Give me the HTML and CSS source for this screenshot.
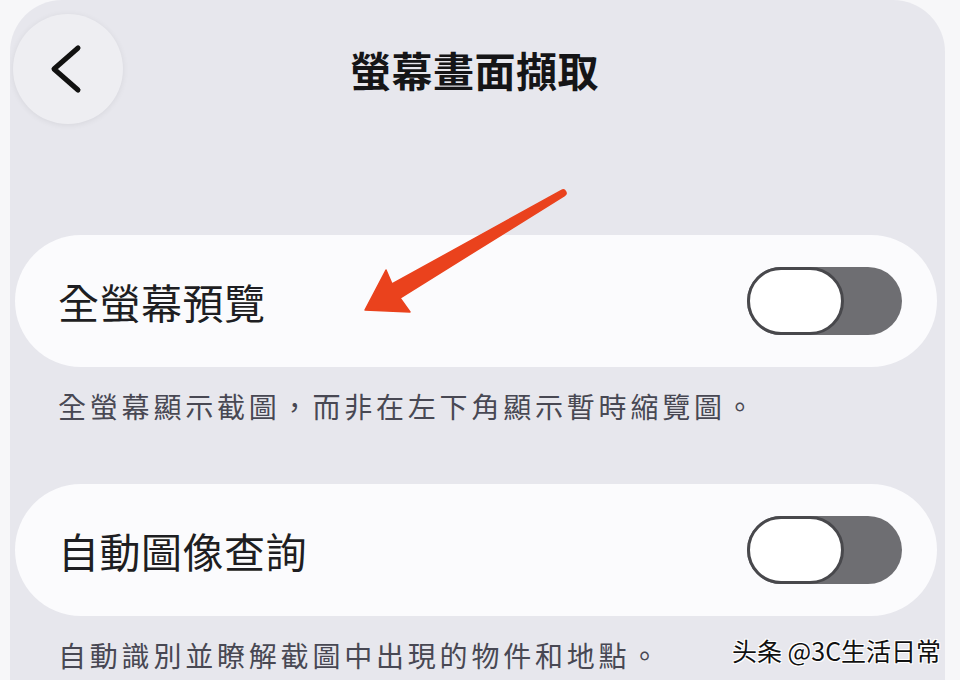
FILE: index.html
```html
<!DOCTYPE html>
<html lang="zh-Hant">
<head>
<meta charset="utf-8">
<link rel="stylesheet" href="styles.css">
</head>
<body>
<div class="panel">
  <header class="header">
    <button class="back" aria-label="返回">
      <svg width="40" height="60" viewBox="0 0 40 60"><path d="M30 9 L6 30 L30 51" fill="none" stroke="#111" stroke-width="5" stroke-linecap="round" stroke-linejoin="round"/></svg>
    </button>
    <h1 class="title">螢幕畫面擷取</h1>
    <div></div>
  </header>

  <section class="row first">
    <span class="label">全螢幕預覽</span>
    <span class="toggle"><span class="thumb"></span></span>
  </section>
  <p class="desc">全螢幕顯示截圖，而非在左下角顯示暫時縮覽圖。</p>

  <section class="row second">
    <span class="label">自動圖像查詢</span>
    <span class="toggle"><span class="thumb"></span></span>
  </section>
  <p class="desc">自動識別並瞭解截圖中出現的物件和地點。</p>
</div>

<svg class="arrow" width="960" height="680" viewBox="0 0 960 680">
  <path d="M365 310 L386 270 L392 284 L561.5 190.4 A3 3 0 0 1 564.5 195.6 L400 298 L410 312 Z" fill="#ea421d" stroke="#ea421d" stroke-width="1.5" stroke-linejoin="round"/>
</svg>

<div class="watermark">头条 @3C生活日常</div>
</body>
</html>
```
FILE: styles.css
```css
html, body {
  margin: 0;
  padding: 0;
}
body {
  width: 960px;
  height: 680px;
  overflow: hidden;
  background: #f7f7f9;
  font-family: "Noto Sans CJK TC", "Noto Sans CJK SC", sans-serif;
  position: relative;
}
.panel {
  margin-left: 10px;
  width: 935px;
  height: 680px;
  background: #e7e7ed;
  border-radius: 52px 52px 0 0;
  overflow: hidden;
}
.header {
  display: grid;
  grid-template-columns: 1fr auto 1fr;
  align-items: center;
  padding-top: 14px;
  height: 110px;
}
.back {
  width: 110px;
  height: 110px;
  margin-left: 3px;
  border-radius: 50%;
  border: none;
  background: #eeeef2;
  box-shadow: 0 1px 6px rgba(0, 0, 0, 0.07);
  display: flex;
  align-items: center;
  justify-content: center;
  padding: 0;
}
.back svg {
  display: block;
}
.title {
  margin: 0 0 0 -6px;
  font-size: 41px;
  font-weight: 700;
  color: #151517;
  letter-spacing: 0.5px;
}
.row {
  margin: 0 8px 0 5px;
  height: 132px;
  border-radius: 66px;
  background: #fbfbfd;
  display: flex;
  align-items: center;
  justify-content: space-between;
  padding: 0 35px 0 43px;
}
.row.first {
  margin-top: 111px;
}
.row.second {
  margin-top: 58px;
}
.label {
  font-size: 41px;
  color: #1e1e22;
  letter-spacing: 0.5px;
}
.toggle {
  width: 155px;
  height: 68px;
  border-radius: 34px;
  background: #6e6e72;
  display: flex;
  align-items: center;
}
.thumb {
  width: 97px;
  height: 68px;
  box-sizing: border-box;
  border-radius: 34px;
  background: #ffffff;
  border: 3px solid #48484c;
}
.desc {
  margin: 19px 0 0 48px;
  font-size: 28px;
  line-height: 40px;
  color: #484853;
  letter-spacing: 3.8px;
}
.arrow {
  position: absolute;
  left: 0;
  top: 0;
  pointer-events: none;
}
.watermark {
  position: absolute;
  left: 732px;
  top: 632px;
  font-family: "Noto Sans CJK SC", sans-serif;
  font-size: 25px;
  color: #111;
  text-shadow: -1px -1px 0 #fff, 1px -1px 0 #fff, -1px 1px 0 #fff, 1px 1px 0 #fff;
  white-space: nowrap;
}
```
